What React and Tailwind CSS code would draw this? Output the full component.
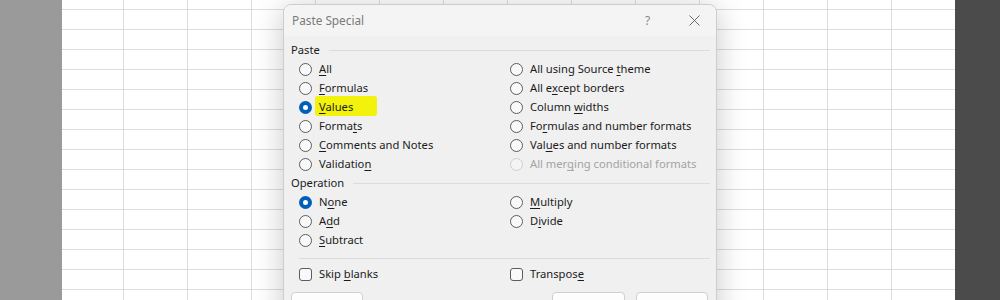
import React from "react";

const FONT = { fontFamily: '"Noto Sans", "Open Sans", sans-serif' };

function Label({ text, u, disabled }) {
  const i = u;
  return (
    <span className={disabled ? "text-[#a3a3a3]" : "text-[#1b1b1b]"}>
      {text.slice(0, i)}
      <span className="underline underline-offset-[2px] decoration-[1px]">{text.slice(i, i + 1)}</span>
      {text.slice(i + 1)}
    </span>
  );
}

function Radio({ checked, disabled }) {
  if (checked) {
    return (
      <span className="w-[13px] h-[13px] rounded-full bg-[#005fb8] flex items-center justify-center shrink-0">
        <span className="w-[5px] h-[5px] rounded-full bg-white" />
      </span>
    );
  }
  return (
    <span
      className={
        disabled
          ? "w-[13px] h-[13px] rounded-full border border-[#cfcfcf] bg-[#f4f4f4] shrink-0"
          : "w-[13px] h-[13px] rounded-full border border-[#5c5c5c] bg-[#f9f9f9] shrink-0"
      }
    />
  );
}

function Item({ text, u, checked, disabled, highlight }) {
  return (
    <div className="h-[19px] flex items-center gap-[7px]">
      <Radio checked={checked} disabled={disabled} />
      <span className="relative">
        {highlight && (
          <span className="absolute left-[-4px] top-[-3px] w-[62px] h-[20px] bg-[#f2f20c] rounded-[3px]" />
        )}
        <span className="relative">
          <Label text={text} u={u} disabled={disabled} />
        </span>
      </span>
    </div>
  );
}

function Check({ text, u }) {
  return (
    <div className="h-[19px] flex items-center gap-[7px]">
      <span className="w-[13px] h-[13px] rounded-[3px] border border-[#5c5c5c] bg-[#f9f9f9] shrink-0" />
      <Label text={text} u={u} />
    </div>
  );
}

function Header({ title }) {
  return (
    <div className="h-[19px] flex items-center gap-[9px] pl-[7px] pr-[6px]">
      <span className="text-[#1b1b1b]">{title}</span>
      <span className="flex-1 h-px bg-[#dcdcdc]" />
    </div>
  );
}

function Button({ children, className }) {
  return (
    <div
      className={
        "h-[24px] rounded-[4px] border border-[#d0d0d0] bg-[#fdfdfd] flex items-center justify-center text-[#1b1b1b] " +
        className
      }
    >
      {children}
    </div>
  );
}

export default function App() {
  return (
    <div className="relative w-[1000px] h-[300px] overflow-hidden flex text-[11.2px]" style={FONT}>
      <div className="w-[62px] h-full bg-[#9a9a9a]" />
      <div className="flex-1 h-full bg-white bg-[linear-gradient(to_right,#dddddd_1px,transparent_1px),linear-gradient(to_bottom,#dddddd_1px,transparent_1px)] bg-[size:64px_20px] bg-[position:61px_9px]" />
      <div className="w-[45px] h-full bg-[#4b4b4b]" />

      <div className="absolute left-[283px] top-[4px] w-[434px] h-[330px] rounded-[8px] border border-[#cdcdcd] bg-[#f0f0f0] shadow-[0_4px_30px_rgba(0,0,0,0.22)] overflow-hidden">
        <div className="h-[31px] bg-[#f4f4f4] flex items-center pl-[8px] relative">
          <span className="text-[#7a7a7a] text-[11.8px]">Paste Special</span>
          <span className="absolute left-[361px] top-[7px] text-[#8a8a8a] text-[12px]">?</span>
          <svg className="absolute left-[405px] top-[10px]" width="11" height="11" viewBox="0 0 11 11">
            <path d="M0.5 0.5 L10.5 10.5 M10.5 0.5 L0.5 10.5" stroke="#6b6b6b" strokeWidth="1" fill="none" />
          </svg>
        </div>
        <div className="pt-[4px]">
          <div className="h-[20px] flex items-center">
            <div className="w-full">
              <Header title="Paste" />
            </div>
          </div>
          <div className="grid grid-cols-[211px_1fr] pl-[15px]">
            <div className="flex flex-col">
              <Item text="All" u={0} />
              <Item text="Formulas" u={0} />
              <Item text="Values" u={0} checked highlight />
              <Item text="Formats" u={5} />
              <Item text="Comments and Notes" u={0} />
              <Item text="Validation" u={9} />
            </div>
            <div className="flex flex-col">
              <Item text="All using Source theme" u={17} />
              <Item text="All except borders" u={5} />
              <Item text="Column widths" u={7} />
              <Item text="Formulas and number formats" u={2} />
              <Item text="Values and number formats" u={3} />
              <Item text="All merging conditional formats" u={7} disabled />
            </div>
          </div>
          <Header title="Operation" />
          <div className="grid grid-cols-[211px_1fr] pl-[15px]">
            <div className="flex flex-col">
              <Item text="None" u={1} checked />
              <Item text="Add" u={1} />
              <Item text="Subtract" u={0} />
            </div>
            <div className="flex flex-col">
              <Item text="Multiply" u={0} />
              <Item text="Divide" u={1} />
            </div>
          </div>
          <div className="mt-[8px] ml-[15px] mr-[6px] h-px bg-[#dcdcdc]" />
          <div className="mt-[6px] grid grid-cols-[211px_1fr] pl-[15px]">
            <Check text="Skip blanks" u={5} />
            <Check text="Transpose" u={8} />
          </div>
          <div className="mt-[8px] flex items-center pl-[7px] pr-[8px]">
            <Button className="w-[72px]">
              <Label text="Paste Link" u={6} />
            </Button>
            <div className="flex-1" />
            <Button className="w-[73px]">OK</Button>
            <Button className="w-[72px] ml-[11px]">Cancel</Button>
          </div>
        </div>
      </div>
    </div>
  );
}
